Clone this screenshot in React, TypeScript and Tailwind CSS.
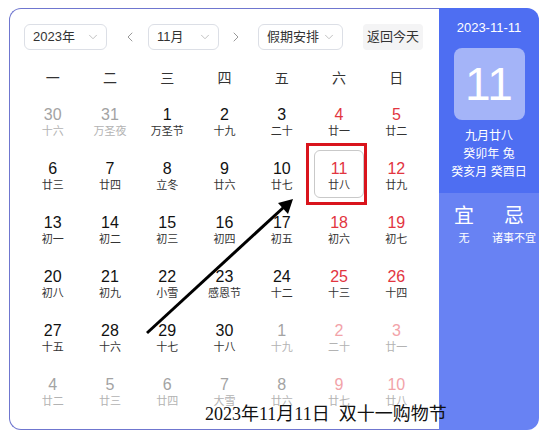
import { ChevronDown, ChevronLeft, ChevronRight } from 'lucide-react'

type Day = { n: number; l: string; kind: 'cur' | 'other'; red?: boolean; sel?: boolean }

const rows: Day[][] = [
  [
    { n: 30, l: '十六', kind: 'other' },
    { n: 31, l: '万圣夜', kind: 'other' },
    { n: 1, l: '万圣节', kind: 'cur' },
    { n: 2, l: '十九', kind: 'cur' },
    { n: 3, l: '二十', kind: 'cur' },
    { n: 4, l: '廿一', kind: 'cur', red: true },
    { n: 5, l: '廿二', kind: 'cur', red: true },
  ],
  [
    { n: 6, l: '廿三', kind: 'cur' },
    { n: 7, l: '廿四', kind: 'cur' },
    { n: 8, l: '立冬', kind: 'cur' },
    { n: 9, l: '廿六', kind: 'cur' },
    { n: 10, l: '廿七', kind: 'cur' },
    { n: 11, l: '廿八', kind: 'cur', red: true, sel: true },
    { n: 12, l: '廿九', kind: 'cur', red: true },
  ],
  [
    { n: 13, l: '初一', kind: 'cur' },
    { n: 14, l: '初二', kind: 'cur' },
    { n: 15, l: '初三', kind: 'cur' },
    { n: 16, l: '初四', kind: 'cur' },
    { n: 17, l: '初五', kind: 'cur' },
    { n: 18, l: '初六', kind: 'cur', red: true },
    { n: 19, l: '初七', kind: 'cur', red: true },
  ],
  [
    { n: 20, l: '初八', kind: 'cur' },
    { n: 21, l: '初九', kind: 'cur' },
    { n: 22, l: '小雪', kind: 'cur' },
    { n: 23, l: '感恩节', kind: 'cur' },
    { n: 24, l: '十二', kind: 'cur' },
    { n: 25, l: '十三', kind: 'cur', red: true },
    { n: 26, l: '十四', kind: 'cur', red: true },
  ],
  [
    { n: 27, l: '十五', kind: 'cur' },
    { n: 28, l: '十六', kind: 'cur' },
    { n: 29, l: '十七', kind: 'cur' },
    { n: 30, l: '十八', kind: 'cur' },
    { n: 1, l: '十九', kind: 'other' },
    { n: 2, l: '二十', kind: 'other', red: true },
    { n: 3, l: '廿一', kind: 'other', red: true },
  ],
  [
    { n: 4, l: '廿二', kind: 'other' },
    { n: 5, l: '廿三', kind: 'other' },
    { n: 6, l: '廿四', kind: 'other' },
    { n: 7, l: '大雪', kind: 'other' },
    { n: 8, l: '廿六', kind: 'other' },
    { n: 9, l: '廿七', kind: 'other', red: true },
    { n: 10, l: '廿八', kind: 'other', red: true },
  ],
]

const weekdays = ['一', '二', '三', '四', '五', '六', '日']

function Select({ label, width }: { label: string; width: string }) {
  return (
    <div
      className={`flex h-[26px] items-center justify-between rounded-[6px] border border-[#dcdfe6] pl-[8px] pr-[6px] text-[13px] text-[#333] ${width}`}
    >
      <span>{label}</span>
      <ChevronDown size={14} strokeWidth={1.5} className="text-[#b8b8b8]" />
    </div>
  )
}

function Cell({ d }: { d: Day }) {
  let numColor = 'text-[#111]'
  let lunarColor = 'text-[#333]'
  if (d.kind === 'other') {
    numColor = d.red ? 'text-[#f2a3a9]' : 'text-[#a3a3a3]'
    lunarColor = 'text-[#b3b3b3]'
  } else if (d.red) {
    numColor = 'text-[#e2353f]'
  }
  return (
    <div className="flex h-[54px] items-center justify-center">
      <div
        className={`flex h-[48px] w-[50px] flex-col items-center justify-center pt-[4px] ${
          d.sel ? 'rounded-[6px] border border-[#c9c9c9]' : ''
        }`}
      >
        <div className={`text-[16px] leading-[18px] ${numColor}`}>{d.n}</div>
        <div className={`text-[11px] leading-[14px] ${lunarColor}`}>{d.l}</div>
      </div>
    </div>
  )
}

export default function App() {
  return (
    <div
      className="relative h-[436px] w-[548px] bg-white pl-[9px] pt-[8px]"
      style={{ fontFamily: '"Liberation Sans", "Noto Sans CJK SC", sans-serif' }}
    >
      <div className="flex h-[422px] w-[530px]">
        <div className="w-[430px] rounded-l-[12px] border-y border-l border-[#6f76cf] px-[14px] pt-[15px]">
          <div className="flex items-center">
            <Select label="2023年" width="w-[83px]" />
            <ChevronLeft size={16} strokeWidth={1.5} className="ml-[15px] text-[#999]" />
            <div className="ml-[10px]">
              <Select label="11月" width="w-[71px]" />
            </div>
            <ChevronRight size={16} strokeWidth={1.5} className="ml-[9px] text-[#999]" />
            <div className="ml-[14px]">
              <Select label="假期安排" width="w-[85px]" />
            </div>
            <div className="ml-[20px] flex h-[26px] w-[60px] items-center justify-center rounded-[4px] bg-[#f4f4f5] text-[13px] text-[#333]">
              返回今天
            </div>
          </div>
          <div className="mt-[13px] grid grid-cols-7">
            {weekdays.map((w) => (
              <div key={w} className="flex h-[30px] items-center justify-center text-[14px] text-[#333]">
                {w}
              </div>
            ))}
          </div>
          <div className="grid grid-cols-7">
            {rows.flat().map((d, i) => (
              <Cell key={i} d={d} />
            ))}
          </div>
        </div>
        <div className="flex w-[100px] flex-col overflow-hidden rounded-r-[12px] text-white">
          <div className="flex h-[185px] flex-col items-center bg-[#4e6ef2] pt-[11px]">
            <div className="text-[13px] leading-[18px]">2023-11-11</div>
            <div className="mt-[11px] flex h-[72px] w-[71px] items-center justify-center rounded-[8px] bg-[#a4b4f8] text-[46px] leading-none">
              11
            </div>
            <div className="mt-[7px] text-[12px] leading-[18px]">九月廿八</div>
            <div className="text-[12px] leading-[18px]">癸卯年 兔</div>
            <div className="text-[12px] leading-[18px]">癸亥月 癸酉日</div>
          </div>
          <div className="flex flex-1 bg-[#6882f3] pt-[10px]">
            <div className="flex w-[50px] flex-col items-center">
              <div className="text-[20px] leading-[26px]">宜</div>
              <div className="mt-[2px] text-[11px] leading-[14px]">无</div>
            </div>
            <div className="flex w-[50px] flex-col items-center">
              <div className="text-[20px] leading-[26px]">忌</div>
              <div className="mt-[2px] whitespace-nowrap text-[11px] leading-[14px]">诸事不宜</div>
            </div>
          </div>
        </div>
      </div>

      {/* annotation overlays */}
      <div className="absolute left-[306px] top-[143px] h-[62px] w-[61px] border-[3px] border-[#d9141c]" />
      <svg className="absolute left-0 top-0" width="548" height="436">
        <line x1="147" y1="333" x2="284" y2="207" stroke="#000" strokeWidth="3" />
        <polygon points="293,199 288,214 278,203" fill="#000" />
      </svg>
      <div
        className="absolute left-[205px] top-[402px] whitespace-nowrap text-[18px] leading-[24px] text-[#111]"
        style={{ fontFamily: '"Liberation Serif", "Noto Sans CJK SC", serif' }}
      >
        2023年11月11日&nbsp;&nbsp;双十一购物节
      </div>
    </div>
  )
}
